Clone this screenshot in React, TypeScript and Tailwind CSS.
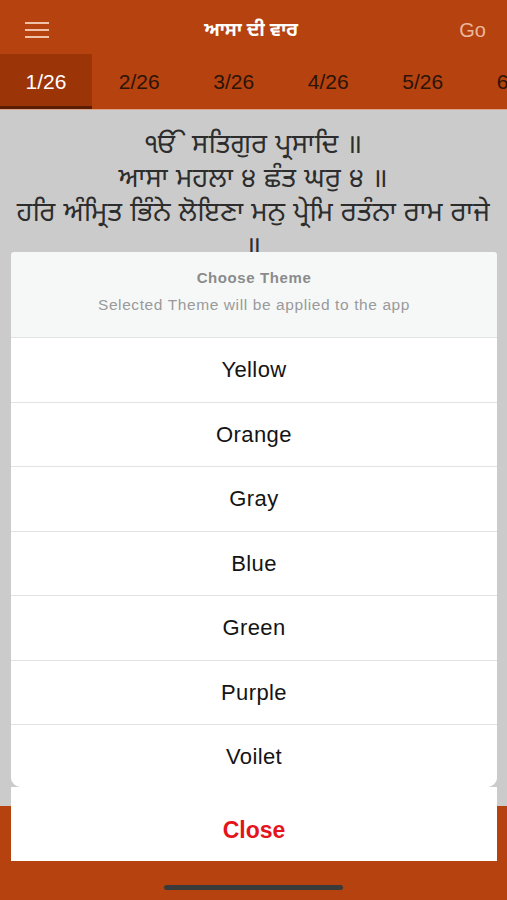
import React from "react";

const TABS = ["1/26", "2/26", "3/26", "4/26", "5/26", "6/26"];
const THEMES = ["Yellow", "Orange", "Gray", "Blue", "Green", "Purple", "Voilet"];

const LINES = [
  "ੴ ਸਤਿਗੁਰ ਪ੍ਰਸਾਦਿ ॥",
  "ਆਸਾ ਮਹਲਾ ੪ ਛੰਤ ਘਰੁ ੪ ॥",
  "ਹਰਿ ਅੰਮ੍ਰਿਤ ਭਿੰਨੇ ਲੋਇਣਾ ਮਨੁ ਪ੍ਰੇਮਿ ਰਤੰਨਾ ਰਾਮ ਰਾਜੇ",
  "॥",
];

const gurmukhi = { fontFamily: '"Noto Sans Gurmukhi", "Noto Sans", "Lohit Gurmukhi", sans-serif' };

export default function App() {
  return (
    <div
      className="relative flex flex-col w-[507px] h-[900px] overflow-hidden bg-[#b5420f]"
      style={{ fontFamily: '"Liberation Sans", Arial, sans-serif' }}
    >
      {/* Header */}
      <div className="flex items-center h-[54px] pt-[5px] pl-[25px] pr-[21px]">
        <div className="flex flex-col gap-[5px] w-[24px]">
          <span className="block h-[2px] bg-[#f1c2aa]" />
          <span className="block h-[2px] bg-[#f1c2aa]" />
          <span className="block h-[2px] bg-[#f1c2aa]" />
        </div>
        <div className="flex-1 text-center text-white font-bold text-[19px] pr-[6px] pt-[5px]" style={gurmukhi}>
          ਆਸਾ ਦੀ ਵਾਰ
        </div>
        <div className="text-[20px] text-[#ebb79d]">Go</div>
      </div>

      {/* Tabs */}
      <div className="flex h-[56px] border-b border-[#d9a58c]">
        {TABS.map((t, i) => (
          <div
            key={t}
            className={
              i === 0
                ? "shrink-0 w-[92px] flex items-center justify-center pt-[3px] text-[21px] text-white bg-[#9b3407] border-b-[3px] border-[#5a1d04]"
                : "shrink-0 w-[94.5px] flex items-center justify-center text-[21px] text-[#2b1408]"
            }
          >
            {t}
          </div>
        ))}
      </div>

      {/* Content */}
      <div
        className="flex-1 bg-[#cbcbcb] pt-[20px] text-center text-[#2d2d2d] text-[27px] leading-[34px] tracking-[0.5px]"
        style={gurmukhi}
      >
        {LINES.map((l, i) => (
          <div key={i} className="whitespace-nowrap">{l}</div>
        ))}
      </div>

      {/* Bottom bar */}
      <div className="h-[94px] flex items-end justify-center pb-[10px]">
        <div className="w-[179px] h-[5px] rounded-full bg-[#3a3a3a]" />
      </div>

      {/* Action sheet */}
      <div className="absolute left-[11px] right-[10px] bottom-[39px] flex flex-col">
        <div className="bg-[#f6f8f8] rounded-t-[3px] rounded-b-[10px]">
          <div className="h-[86px] flex flex-col items-center pt-[15px] border-b border-[#e2e4e4]">
            <div className="text-[15px] font-bold text-[#8b8b8b] tracking-[0.6px]">Choose Theme</div>
            <div className="text-[15.5px] text-[#9a9a9a] mt-[3px] tracking-[0.6px]">
              Selected Theme will be applied to the app
            </div>
          </div>
          {THEMES.map((t, i) => (
            <div
              key={t}
              className={
                i < THEMES.length - 1
                  ? "h-[64.5px] flex items-center justify-center text-[22px] tracking-[0.4px] text-[#141414] bg-white border-b border-[#e2e4e4]"
                  : "h-[62px] flex items-center justify-center text-[22px] tracking-[0.4px] text-[#141414] bg-white rounded-b-[10px]"
              }
            >
              {t}
            </div>
          ))}
        </div>
        <div className="h-[74px] bg-white flex items-center justify-center pt-[12px] text-[23px] font-bold text-[#e5141b]">
          Close
        </div>
      </div>
    </div>
  );
}
